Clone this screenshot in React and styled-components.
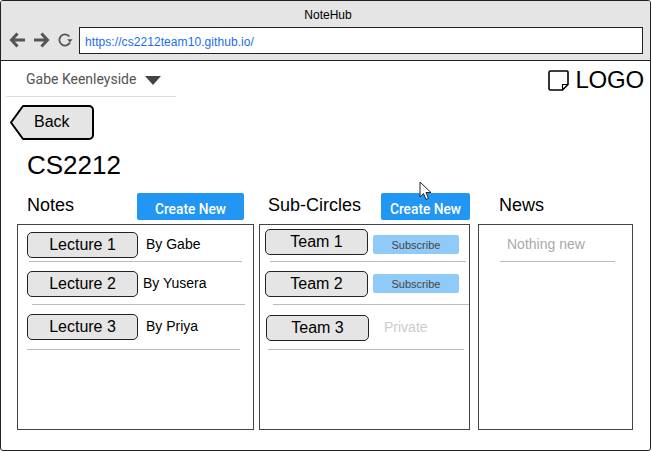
import React from 'react';
import styled, { createGlobalStyle } from 'styled-components';

const GlobalStyle = createGlobalStyle`
  html, body {
    margin: 0;
    background: #fff;
  }
  * {
    box-sizing: border-box;
  }
`;

const Browser = styled.div`
  position: relative;
  width: 651px;
  height: 451px;
  border: 1px solid #222;
  border-radius: 3px;
  background: #fff;
  overflow: hidden;
  font-family: "Liberation Sans", Arial, sans-serif;
  color: #000;
`;

const Chrome = styled.header`
  height: 60px;
  background: #e5e5e5;
  border-bottom: 1px solid #222;
  padding: 7px 7px 0 8px;
`;

const WindowTitle = styled.div`
  height: 19px;
  line-height: 15px;
  font-size: 12px;
  text-align: center;
  padding-left: 4px;
`;

const AddressRow = styled.div`
  display: flex;
  align-items: center;
`;

const NavIcons = styled.div`
  display: flex;
  align-items: center;
  width: 70px;
  gap: 7px;
  margin-top: -2px;
`;

const UrlBox = styled.div`
  flex: 1;
  height: 27px;
  background: #fff;
  border: 1px solid #222;
  padding-left: 5px;
  font-size: 12px;
  letter-spacing: 0.07px;
  line-height: 28px;
  color: #1a6df0;
`;

const TopRow = styled.div`
  display: flex;
  justify-content: space-between;
  height: 36px;
  padding-right: 6px;
`;

const UserMenu = styled.div`
  width: 170px;
  height: 36px;
  margin-left: 5px;
  border-bottom: 1px solid #ddd;
  display: flex;
  align-items: center;
  padding: 0 0 0 20px;
  gap: 9px;
  font-family: Roboto, sans-serif;
  font-size: 14px;
  color: #555;
`;

const Caret = styled.span`
  width: 0;
  height: 0;
  margin-top: 3px;
  border-left: 8px solid transparent;
  border-right: 8px solid transparent;
  border-top: 9px solid #444;
`;

const Logo = styled.div`
  display: flex;
  align-items: center;
  gap: 6px;
  height: 36px;
  font-size: 24px;
  padding-top: 2px;
  letter-spacing: -0.2px;
`;

const BackWrap = styled.div`
  width: 85px;
  height: 35px;
  margin: 8px 0 0 9px;
  position: relative;
`;

const BackShape = styled.svg`
  position: absolute;
  inset: 0;
`;

const BackLabel = styled.span`
  position: absolute;
  left: 24px;
  top: 7px;
  font-size: 16px;
  line-height: 20px;
`;

const PageTitle = styled.h1`
  margin: 8px 0 0 26px;
  height: 35px;
  font-size: 26px;
  line-height: 34px;
  font-weight: 400;
`;

const Columns = styled.div`
  display: grid;
  grid-template-columns: 237px 211px 158px;
  column-gap: 5px;
  margin: 10px 0 0 16px;
`;

const Column = styled.section`
  margin-left: ${(p) => p.$shift || 0}px;
`;

const ColumnHead = styled.div`
  height: 31px;
  display: flex;
  align-items: flex-start;
  justify-content: space-between;
  padding-left: ${(p) => p.$pad}px;
`;

const ColumnTitle = styled.h2`
  margin: 0;
  font-size: 18px;
  line-height: 24px;
  font-weight: 400;
`;

const CreateButton = styled.button`
  width: ${(p) => p.$width}px;
  height: 27px;
  margin: 0 ${(p) => p.$right || 0}px 0 0;
  padding: 5px 0 0;
  border: 0;
  border-radius: 2px;
  background: #2196f3;
  color: #fff;
  font-family: Roboto, sans-serif;
  font-size: 13.75px;
  font-weight: 500;
  line-height: 22px;
`;

const Panel = styled.div`
  height: 206px;
  border: 1px solid #444;
`;

const Row = styled.div`
  display: flex;
  align-items: ${(p) => p.$align || 'center'};
  height: 26px;
  margin: ${(p) => p.$top}px 0 0 ${(p) => p.$left}px;
`;

const ItemButton = styled.div`
  width: ${(p) => p.$width}px;
  height: 26px;
  flex: none;
  border: 1px solid #222;
  border-radius: 5px;
  background: #e5e5e5;
  text-align: center;
  font-size: 16px;
  line-height: 24px;
`;

const Author = styled.span`
  margin: 0 0 2px ${(p) => p.$gap}px;
  font-size: 14px;
  line-height: 24px;
`;

const SubscribeButton = styled.div`
  width: 86px;
  height: 19px;
  margin: ${(p) => p.$top}px 0 0 5px;
  border-radius: 2px;
  background: #90caf9;
  color: #444;
  font-size: 11px;
  line-height: 21px;
  text-align: center;
`;

const MutedLabel = styled.span`
  margin: 0 0 2px 15px;
  font-size: 14px;
  line-height: 24px;
  color: #ccc;
`;

const Divider = styled.div`
  width: ${(p) => p.$width}px;
  height: 1px;
  margin: ${(p) => p.$top}px 0 0 ${(p) => p.$left}px;
  background: #bbb;
`;

const EmptyText = styled.div`
  height: 24px;
  margin: 7px 0 0 28px;
  font-size: 14px;
  line-height: 24px;
  color: #aaa;
`;

const Cursor = styled.svg`
  position: absolute;
  left: 418px;
  top: 180px;
`;

const NavArrow = ({ flip }) => (
  <svg width="17" height="16" viewBox="0 0 17 16" fill="none" style={flip ? { transform: 'scaleX(-1)' } : undefined}>
    <path d="M8.500 1.500 2.500 8l6 6.500M2.500 8H16" stroke="#555" strokeWidth="3" />
  </svg>
);

const ReloadIcon = () => (
  <svg width="16" height="16" viewBox="0 0 16 16" fill="none">
    <path d="M13 10.500A5.600 5.600 0 1 1 12.400 4.500" stroke="#555" strokeWidth="1.800" />
    <path d="M10.200 7.200h5.400L13 10.400z" fill="#555" />
  </svg>
);

const NoteIcon = () => (
  <svg width="21" height="21" viewBox="0 0 21 21" fill="none">
    <path d="M2.500 1h16.500a1 1 0 0 1 1 1v12.500L14.500 20H2.500a1.500 1.500 0 0 1-1.500-1.500v-16A1.500 1.500 0 0 1 2.500 1z" stroke="#000" strokeWidth="1.600" />
    <path d="M20 14.500h-5.500V20" stroke="#000" strokeWidth="1.200" />
  </svg>
);

const App = () => {
  return (
    <Browser>
      <GlobalStyle />
      <Chrome>
        <WindowTitle>NoteHub</WindowTitle>
        <AddressRow>
          <NavIcons>
            <NavArrow />
            <NavArrow flip />
            <ReloadIcon />
          </NavIcons>
          <UrlBox>https://cs2212team10.github.io/</UrlBox>
        </AddressRow>
      </Chrome>

      <TopRow>
        <UserMenu>
          Gabe Keenleyside
          <Caret />
        </UserMenu>
        <Logo>
          <NoteIcon />
          LOGO
        </Logo>
      </TopRow>

      <BackWrap>
        <BackShape width="85" height="35" viewBox="0 0 85 35">
          <path
            d="M13 1H79a4 4 0 0 1 4 4V30a4 4 0 0 1-4 4H13L1 17.500z"
            fill="#e5e5e5"
            stroke="#000"
            strokeWidth="2"
            strokeLinejoin="round"
          />
        </BackShape>
        <BackLabel>Back</BackLabel>
      </BackWrap>

      <PageTitle>CS2212</PageTitle>

      <Columns>
        <Column>
          <ColumnHead $pad={10}>
            <ColumnTitle>Notes</ColumnTitle>
            <CreateButton $width={107} $right={10}>Create New</CreateButton>
          </ColumnHead>
          <Panel>
            <Row $top={7} $left={9}>
              <ItemButton $width={111}>Lecture 1</ItemButton>
              <Author $gap={8}>By Gabe</Author>
            </Row>
            <Divider $top={3} $left={11} $width={213} />
            <Row $top={9} $left={9}>
              <ItemButton $width={111}>Lecture 2</ItemButton>
              <Author $gap={5}>By Yusera</Author>
            </Row>
            <Divider $top={7} $left={14} $width={213} />
            <Row $top={9} $left={9}>
              <ItemButton $width={111}>Lecture 3</ItemButton>
              <Author $gap={8}>By Priya</Author>
            </Row>
            <Divider $top={9} $left={9} $width={213} />
          </Panel>
        </Column>

        <Column>
          <ColumnHead $pad={9}>
            <ColumnTitle>Sub-Circles</ColumnTitle>
            <CreateButton $width={89}>Create New</CreateButton>
          </ColumnHead>
          <Panel>
            <Row $top={4} $left={5} $align="flex-start">
              <ItemButton $width={103}>Team 1</ItemButton>
              <SubscribeButton $top={6}>Subscribe</SubscribeButton>
            </Row>
            <Divider $top={6} $left={10} $width={196} />
            <Row $top={9} $left={5} $align="flex-start">
              <ItemButton $width={103}>Team 2</ItemButton>
              <SubscribeButton $top={3}>Subscribe</SubscribeButton>
            </Row>
            <Divider $top={7} $left={13} $width={196} />
            <Row $top={10} $left={6}>
              <ItemButton $width={103}>Team 3</ItemButton>
              <MutedLabel>Private</MutedLabel>
            </Row>
            <Divider $top={8} $left={8} $width={196} />
          </Panel>
        </Column>

        <Column $shift={3}>
          <ColumnHead $pad={21}>
            <ColumnTitle>News</ColumnTitle>
          </ColumnHead>
          <Panel>
            <EmptyText>Nothing new</EmptyText>
            <Divider $top={5} $left={21} $width={115} />
          </Panel>
        </Column>
      </Columns>

      <Cursor width="14" height="21" viewBox="0 0 14 21">
        <path d="M1 1v15l3.500-3.500 2.500 6 2.500-1-2.500-6h5z" fill="#fff" stroke="#222" strokeWidth="1" />
      </Cursor>
    </Browser>
  );
};

export default App;
